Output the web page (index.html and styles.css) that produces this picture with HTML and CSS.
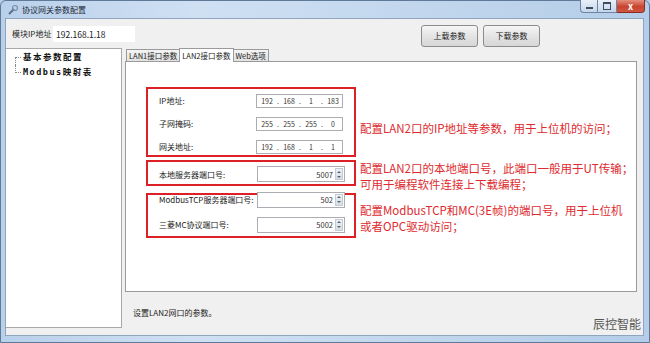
FILE: index.html
```html
<!DOCTYPE html>
<html lang="zh">
<head>
    <meta charset="UTF-8">
    <title>协议网关参数配置</title>
    <link rel="stylesheet" href="styles.css">
</head>
<body>
    <div class="window">
        <div class="titlebar">
            <svg class="app-icon" width="12" height="12" viewBox="0 0 12 12">
                <path d="M2 10 L7 5" stroke="#5a6f8a" stroke-width="2"/>
                <circle cx="8" cy="4" r="2.5" fill="none" stroke="#7a8ea8" stroke-width="1.2"/>
            </svg>
            <span class="title">协议网关参数配置</span>
            <div class="win-buttons">
                <span class="wb wb-min"><i></i></span>
                <span class="wb wb-max"><i></i></span>
                <span class="wb wb-close">x</span>
            </div>
        </div>

        <div class="client">
            <div class="top-row">
                <span class="ip-label">模块IP地址</span>
                <span class="ip-box">192.168.1.18</span>
                <div class="actions">
                    <button class="btn">上载参数</button>
                    <button class="btn">下载参数</button>
                </div>
            </div>

            <div class="main">
                <div class="tree">
                    <div class="tree-item">基本参数配置</div>
                    <div class="tree-item last">Modbus映射表</div>
                </div>

                <div class="right">
                    <div class="tabs">
                        <span class="tab">LAN1接口参数</span>
                        <span class="tab active">LAN2接口参数</span>
                        <span class="tab">Web选项</span>
                    </div>
                    <div class="tab-page">
                        <div class="groups">
                            <div class="group g1">
                                <div class="field">
                                    <span class="lbl">IP地址:</span>
                                    <span class="ipin"><b>192</b><i>.</i><b>168</b><i>.</i><b>1</b><i>.</i><b>183</b></span>
                                </div>
                                <div class="field">
                                    <span class="lbl">子网掩码:</span>
                                    <span class="ipin"><b>255</b><i>.</i><b>255</b><i>.</i><b>255</b><i>.</i><b>0</b></span>
                                </div>
                                <div class="field">
                                    <span class="lbl">网关地址:</span>
                                    <span class="ipin"><b>192</b><i>.</i><b>168</b><i>.</i><b>1</b><i>.</i><b>1</b></span>
                                </div>
                            </div>
                            <div class="note n1">配置LAN2口的IP地址等参数，用于上位机的访问；</div>

                            <div class="group g2">
                                <div class="field">
                                    <span class="lbl">本地服务器端口号:</span>
                                    <span class="spin"><span class="val">5007</span><span class="arrows"><em class="up"></em><em class="down"></em></span></span>
                                </div>
                            </div>
                            <div class="note n2">配置LAN2口的本地端口号，此端口一般用于UT传输；<br>可用于编程软件连接上下载编程；</div>

                            <div class="group g3">
                                <div class="field">
                                    <span class="lbl">ModbusTCP服务器端口号:</span>
                                    <span class="spin"><span class="val">502</span><span class="arrows"><em class="up"></em><em class="down"></em></span></span>
                                </div>
                                <div class="field">
                                    <span class="lbl">三菱MC协议端口号:</span>
                                    <span class="spin"><span class="val">5002</span><span class="arrows"><em class="up"></em><em class="down"></em></span></span>
                                </div>
                            </div>
                            <div class="note n3">配置ModbusTCP和MC(3E帧)的端口号，用于上位机<br>或者OPC驱动访问；</div>
                        </div>
                    </div>
                    <div class="status">
                        <span>设置LAN2网口的参数。</span>
                        <span class="brand">辰控智能</span>
                    </div>
                </div>
            </div>
        </div>
    </div>
</body>
</html>
```

FILE: styles.css
```css
body {
    margin: 0;
    width: 650px;
    height: 343px;
    overflow: hidden;
    font-family: "Noto Sans CJK SC", "DejaVu Sans", sans-serif;
    background-color: #b7cfe9;
}

.window {
    width: 650px;
    height: 343px;
    display: flex;
    flex-direction: column;
    background: linear-gradient(90deg, #b9d0ea, #cfe0f3 30%, #c3d8ee 60%, #b5cde8);
    box-sizing: border-box;
    border: 1px solid #5f7a99;
    border-radius: 6px 6px 0 0;
}

.titlebar {
    height: 17px;
    display: flex;
    align-items: center;
    padding-left: 6px;
    position: relative;
}

.app-icon {
    margin-right: 3px;
}

.title {
    font-size: 8px;
    color: #1e2a3a;
}

.win-buttons {
    position: absolute;
    top: -1px;
    right: 4px;
    display: flex;
}

.wb {
    height: 13px;
    box-sizing: border-box;
    border: 1px solid #6d84a3;
    border-top: none;
    background: linear-gradient(#e8f0f9, #c4d5ea);
    display: flex;
    align-items: center;
    justify-content: center;
}

.wb-min {
    width: 18px;
    border-radius: 0 0 0 4px;
}

.wb-min i {
    width: 7px;
    height: 2px;
    margin-top: 4px;
    background: #3d4d60;
}

.wb-max {
    width: 19px;
    border-left: none;
}

.wb-max i {
    width: 6px;
    height: 5px;
    border: 1px solid #3d4d60;
    border-top-width: 2px;
}

.wb-close {
    width: 28px;
    border-left: none;
    border-radius: 0 0 4px 0;
    border-color: #8a2c22;
    background: linear-gradient(#e4907e, #c8432f 55%, #d0583f);
    color: #ffffff;
    font-size: 9px;
    font-weight: bold;
}

.client {
    flex: 1;
    margin: 0 5px 6px 4px;
    background-color: #f0f0f0;
    border: 1px solid #8ea4bf;
    display: flex;
    flex-direction: column;
}

.top-row {
    height: 29px;
    display: flex;
    align-items: center;
    padding-left: 6px;
}

.ip-label {
    font-size: 8px;
    color: #222222;
    width: 41px;
}

.ip-box {
    background: #ffffff;
    width: 82px;
    height: 16px;
    line-height: 16px;
    font-size: 8.5px;
    padding-left: 3px;
    box-sizing: border-box;
    color: #222222;
}

.actions {
    display: flex;
    gap: 5px;
    margin-left: 286px;
    margin-top: 4px;
}

.btn {
    width: 57px;
    height: 22px;
    font-family: inherit;
    font-size: 8px;
    color: #222222;
    border: 1px solid #8c8c8c;
    border-radius: 3px;
    background: linear-gradient(#f6f6f6, #e4e4e4 50%, #d6d6d6);
    padding: 0;
}

.main {
    flex: 1;
    display: flex;
}

.tree {
    width: 116px;
    margin-bottom: 7px;
    background: #ffffff;
    border: 1px solid #a8a8a8;
    border-left: none;
    padding-top: 1px;
    box-sizing: border-box;
}

.tree-item {
    position: relative;
    height: 15px;
    line-height: 15px;
    padding-left: 17px;
    font-family: "DejaVu Sans Mono", "Noto Sans CJK SC", monospace;
    font-weight: bold;
    font-size: 8.5px;
    letter-spacing: 1.5px;
    color: #111111;
}

.tree-item::before {
    content: "";
    position: absolute;
    left: 9px;
    top: 7px;
    width: 6px;
    border-top: 1px dotted #888888;
}

.tree-item::after {
    content: "";
    position: absolute;
    left: 9px;
    top: 0;
    height: 15px;
    border-left: 1px dotted #888888;
}

.tree-item:first-child::after {
    top: 7px;
    height: 8px;
}

.tree-item.last::after {
    height: 8px;
}

.right {
    flex: 1;
    display: flex;
    flex-direction: column;
    padding-left: 3px;
    padding-right: 6px;
}

.tabs {
    display: flex;
    align-items: flex-end;
    height: 13px;
    padding-left: 1px;
}

.tab {
    font-size: 7.5px;
    height: 11px;
    line-height: 11px;
    padding: 0 2px;
    border: 1px solid #9a9a9a;
    border-bottom: none;
    background: linear-gradient(#f4f4f4, #e2e2e2);
    color: #222222;
    margin-right: -1px;
}

.tab.active {
    height: 13px;
    line-height: 13px;
    background: #ffffff;
    position: relative;
    z-index: 1;
    margin-bottom: -1px;
}

.tab-page {
    height: 231px;
    background: #ffffff;
    border: 1px solid #9a9a9a;
    box-sizing: border-box;
    padding: 25px 0 0 20px;
}

.groups {
    display: grid;
    grid-template-columns: 210px auto;
    column-gap: 4px;
    align-items: start;
}

.group {
    border: 2px solid #dd1f26;
    box-sizing: border-box;
    padding-left: 11px;
}

.g1 {
    height: 70px;
    padding-top: 0;
}

.g2 {
    height: 26px;
    margin-top: 3px;
    padding-top: 4px;
}

.g3 {
    height: 45px;
    margin-top: 7px;
    padding-top: 0;
}

.field {
    display: flex;
    align-items: center;
    height: 23px;
    font-size: 8px;
    color: #222222;
}

.g2 .field {
    height: 16px;
}

.g3 .field {
    height: 25px;
}

.g3 .field:first-child {
    margin-top: -8px;
}

.lbl {
    width: 97px;
    white-space: nowrap;
}

.ipin {
    width: 87px;
    height: 14px;
    box-sizing: border-box;
    border: 1px solid #abadb3;
    font-size: 7px;
    padding-left: 2px;
    color: #333333;
    display: flex;
    align-items: center;
}

.ipin b {
    font-weight: normal;
    width: 16px;
    text-align: center;
}

.ipin i {
    font-style: normal;
    width: 6px;
    text-align: center;
}

.spin {
    width: 88px;
    height: 16px;
    box-sizing: border-box;
    border: 1px solid #abadb3;
    background: #ffffff;
    display: flex;
    align-items: center;
    margin-left: 1px;
}

.val {
    flex: 1;
    text-align: right;
    font-size: 7.5px;
    padding-right: 2px;
    color: #333333;
}

.arrows {
    width: 8px;
    height: 12px;
    margin-right: 1px;
    display: flex;
    flex-direction: column;
    border: 1px solid #c4ccd6;
    box-sizing: border-box;
    background: linear-gradient(#eef2f6, #d6dde6);
}

.arrows em {
    flex: 1;
    display: flex;
    align-items: center;
    justify-content: center;
}

.arrows em::before {
    content: "";
    border-left: 2px solid transparent;
    border-right: 2px solid transparent;
}

.arrows .up::before {
    border-bottom: 2px solid #5a6470;
}

.arrows .down::before {
    border-top: 2px solid #5a6470;
}

.note {
    font-size: 11.5px;
    line-height: 16px;
    color: #de2a2e;
    white-space: nowrap;
    overflow: visible;
}

.n1 {
    height: 70px;
    padding-top: 33px;
    box-sizing: border-box;
}

.n2 {
    height: 26px;
    margin-top: 3px;
}

.n3 {
    height: 45px;
    margin-top: 7px;
    padding-top: 9px;
    box-sizing: border-box;
}

.status {
    flex: 1;
    display: flex;
    justify-content: space-between;
    align-items: flex-start;
    font-size: 8px;
    color: #222222;
    padding: 15px 0 0 8px;
    position: relative;
}

.brand {
    position: absolute;
    right: -4px;
    bottom: 3px;
    font-size: 12px;
    color: #555555;
}
```
